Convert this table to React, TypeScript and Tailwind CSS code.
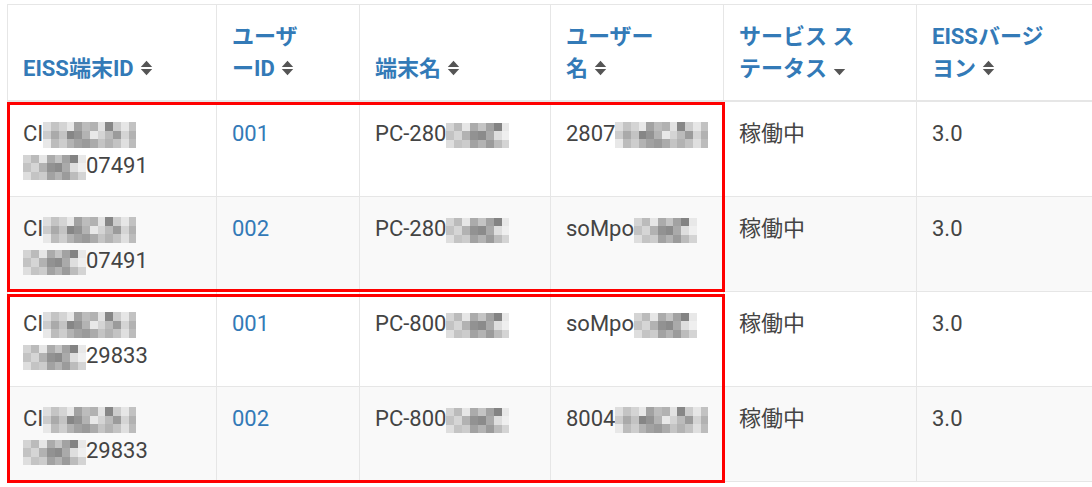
import React from "react";

const BIG = [
  ["#dedede", "#c4c4c4", "#d4d4d4", "#e8e8e8", "#a2a2a2", "#bcbcbc", "#b2b2b2", "#e2e2e2", "#878787", "#cdcdcd", "#e6e6e6", "#c2c2c2"],
  ["#cccccc", "#aaaaaa", "#c3c3c3", "#868686", "#939393", "#b3b3b3", "#e8e8e8", "#d4d4d4", "#bbbbbb", "#9b9b9b", "#d4d4d4", "#b2b2b2"],
  ["#e8e8e8", "#bcbcbc", "#cdcdcd", "#b3b3b3", "#a2a2a2", "#9a9a9a", "#ababab", "#c4c4c4", "#b3b3b3", "#c3c3c3", "#dfdfdf", "#bcbcbc"],
];

const SMALL = [
  ["#d4d4d4", "#bbbbbb", "#e6e6e6", "#ababab", "#c4c4c4", "#a2a2a2", "#838383", "#e8e8e8"],
  ["#c3c3c3", "#d5d5d5", "#b2b2b2", "#929292", "#8b8b8b", "#aaaaaa", "#dedede", "#efefef"],
  ["#dedede", "#c4c4c4", "#cccccc", "#a2a2a2", "#b3b3b3", "#9b9b9b", "#bcbcbc", "#d4d4d4"],
];

function Mosaic({ big }: { big?: boolean }) {
  const data = big ? BIG : SMALL;
  return (
    <span
      className={
        big
          ? "inline-block overflow-hidden w-[93px] h-[26px] align-[-7px]"
          : "inline-block overflow-hidden w-[63px] h-[25px] align-[-7px]"
      }
    >
      <span className={big ? "grid grid-cols-12 grid-rows-3 w-full h-full" : "grid grid-cols-8 grid-rows-3 w-full h-full"}>
        {data.flat().map((c, i) => (
          <span key={i} style={{ backgroundColor: c }} />
        ))}
      </span>
    </span>
  );
}

function SortIcon({ desc }: { desc?: boolean }) {
  return (
    <svg width="13" height="16" viewBox="0 0 13 16" className="inline-block ml-[6px] align-baseline">
      {!desc && <path d="M0.8 7 L6.5 0.8 L12.2 7 Z" fill="#555" />}
      <path d="M0.8 9 L6.5 15.2 L12.2 9 Z" fill="#555" />
    </svg>
  );
}

type Row = { tail: string; uid: string; pc: string; unamePrefix: string; unameBig: boolean };

const rows: Row[] = [
  { tail: "07491", uid: "001", pc: "PC-280", unamePrefix: "2807", unameBig: true },
  { tail: "07491", uid: "002", pc: "PC-280", unamePrefix: "soMpo", unameBig: false },
  { tail: "29833", uid: "001", pc: "PC-800", unamePrefix: "soMpo", unameBig: false },
  { tail: "29833", uid: "002", pc: "PC-800", unamePrefix: "8004", unameBig: true },
];

export default function App() {
  const th =
    "border border-[#e6e6e6] border-b-2 align-bottom text-left font-bold text-[#337ab7] px-[15px] pt-[16px] pb-[15px]";
  const td = "border border-[#e6e6e6] align-top px-[15px] pt-[16px] pb-[14px] whitespace-nowrap";
  return (
    <div className="relative w-[1092px] h-[487px] overflow-hidden bg-white pl-[7px] pt-[4px] font-['Roboto','Noto_Sans_CJK_JP',sans-serif] text-[22px] leading-[32px] text-[#444]">
      <table className="table-fixed border-collapse w-[1110px]">
        <colgroup>
          <col className="w-[209px]" />
          <col className="w-[143px]" />
          <col className="w-[191px]" />
          <col className="w-[173px]" />
          <col className="w-[193px]" />
          <col className="w-[201px]" />
        </colgroup>
        <thead>
          <tr>
            <th className={th}>
              EISS端末ID<SortIcon />
            </th>
            <th className={th}>
              ユーザ
              <br />
              ーID<SortIcon />
            </th>
            <th className={th}>
              端末名<SortIcon />
            </th>
            <th className={th}>
              ユーザー
              <br />
              名<SortIcon />
            </th>
            <th className={th}>
              サービス ス
              <br />
              テータス<SortIcon desc />
            </th>
            <th className={th}>
              EISSバージ
              <br />
              ヨン<SortIcon />
            </th>
          </tr>
        </thead>
        <tbody>
          {rows.map((r, i) => (
            <tr key={i} className={i % 2 === 1 ? "bg-[#f9f9f9]" : "bg-white"}>
              <td className={td}>
                CI<Mosaic big />
                <br />
                <Mosaic />
                {r.tail}
              </td>
              <td className={td}>
                <a className="text-[#337ab7]">{r.uid}</a>
              </td>
              <td className={td}>
                {r.pc}
                <Mosaic />
              </td>
              <td className={td}>
                {r.unamePrefix}
                <Mosaic big={r.unameBig} />
              </td>
              <td className={td}>稼働中</td>
              <td className={td}>3.0</td>
            </tr>
          ))}
        </tbody>
      </table>
      <div className="absolute left-[7px] top-[102px] w-[718px] h-[190px] border-[3px] border-[#ff0000]" />
      <div className="absolute left-[7px] top-[294px] w-[718px] h-[189px] border-[3px] border-[#ff0000]" />
    </div>
  );
}
